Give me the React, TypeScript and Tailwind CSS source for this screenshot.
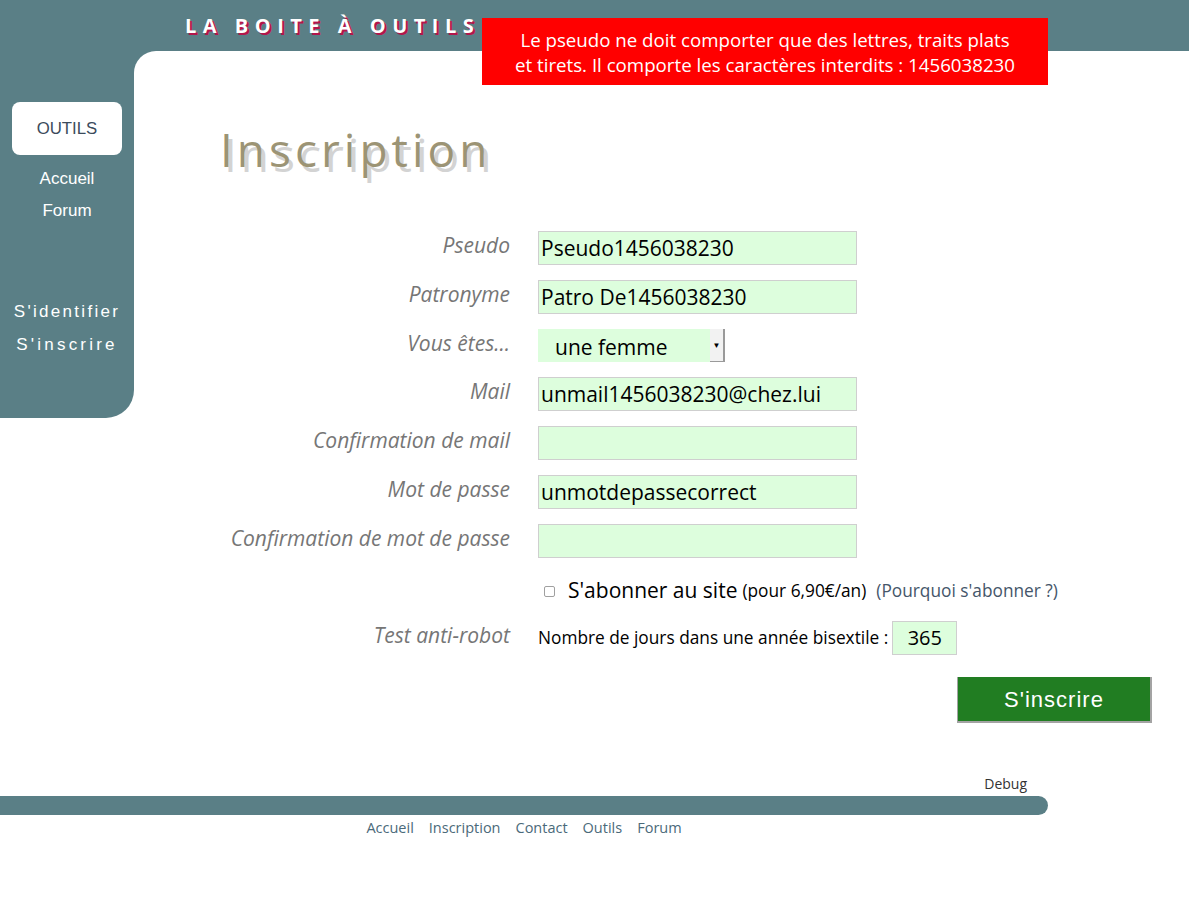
import type { ReactNode } from "react";

const TEAL = "bg-[#5a7f86]";

const fields: { label: string; value: string }[] = [
  { label: "Pseudo", value: "Pseudo1456038230" },
  { label: "Patronyme", value: "Patro De1456038230" },
  { label: "Vous êtes...", value: "__select__" },
  { label: "Mail", value: "unmail1456038230@chez.lui" },
  { label: "Confirmation de mail", value: "" },
  { label: "Mot de passe", value: "unmotdepassecorrect" },
  { label: "Confirmation de mot de passe", value: "" },
];

function Row({ label, children }: { label?: string; children: ReactNode }) {
  return (
    <div className="flex items-center gap-[28px]">
      <span className="w-[376px] shrink-0 text-right text-[21px] italic text-[#767676] -mt-[4px]">{label}</span>
      {children}
    </div>
  );
}

function FakeSelect() {
  return (
    <div className="flex h-[33px] w-[187px] items-stretch bg-[#ddfedd]">
      <span className="flex-1 pl-[17px] text-[21px] leading-[36px] text-black">une femme</span>
      <span className="flex w-[15px] items-center justify-center border-r-2 border-b border-[#9a9a9a] bg-[#f2f2f2] text-[8px] text-black">
        ▼
      </span>
    </div>
  );
}

export default function App() {
  return (
    <div
      className="relative min-h-[922px] w-full bg-[linear-gradient(#5a7f86_0_90px,white_90px)] font-['Open_Sans',sans-serif]"
    >
      {/* top band */}
      <div className="h-[51px] pl-[185px] pt-[11px]">
        <span className="text-[20px] font-bold tracking-[6.5px] text-white [text-shadow:2px_2px_0_#b3164b]">
          LA BOITE À OUTILS
        </span>
      </div>

      {/* error flash */}
      <div className="absolute left-[482px] top-[18px] flex h-[67px] w-[566px] items-center justify-center bg-[#ff0000] text-center text-[18.7px] leading-[25px] text-white">
        <p>
          Le pseudo ne doit comporter que des lettres, traits plats
          <br />
          et tirets. Il comporte les caractères interdits : 1456038230
        </p>
      </div>

      <div className="flex">
        <nav
          className={`${TEAL} flex h-[367px] w-[134px] shrink-0 flex-col items-center rounded-br-[28px] font-['Liberation_Sans',Arial,sans-serif] text-white`}
        >
          <div className="mt-[51px] flex h-[53px] w-[110px] items-center justify-center rounded-[8px] bg-white text-[16.8px] text-[#3b4b5c]">
            OUTILS
          </div>
          <a className="mt-[14px] text-[17px] leading-[20px]">Accueil</a>
          <a className="mt-[12px] text-[17px] leading-[20px]">Forum</a>
          <a className="mt-[81px] text-[17px] leading-[20px] tracking-[2.3px]">S'identifier</a>
          <a className="mt-[13px] text-[17px] leading-[20px] tracking-[3.2px]">S'inscrire</a>
        </nav>

        <main className="flex-1 rounded-tl-[22px] bg-white pb-[51px]">
          <h1 className="ml-[86px] mt-[72px] text-[46px] leading-[52px] tracking-[4px] text-[#9c9475] [text-shadow:4px_5px_0_#d3d3d3]">
            Inscription
          </h1>

          <div className="mt-[56px] flex flex-col gap-[15px]">
            {fields.map((f) => (
              <Row key={f.label} label={f.label}>
                {f.value === "__select__" ? (
                  <FakeSelect />
                ) : (
                  <div className="h-[34px] w-[319px] border border-[#cfcfcf] bg-[#ddfedd] pl-[2px] text-[21px] leading-[32px] text-black">
                    {f.value}
                  </div>
                )}
              </Row>
            ))}
          </div>

          <div className="mt-[16px] flex h-[34px] items-center pl-[404px]">
            <span className="ml-[6px] h-[11px] w-[11px] rounded-[2px] border border-[#a0a0a0] bg-white" />
            <span className="ml-[13px] text-[21px] text-black">S'abonner au site</span>
            <span className="ml-[5px] text-[17.3px] text-black">(pour 6,90€/an)</span>
            <span className="ml-[10px] text-[17.3px] text-[#45566a]">(Pourquoi s'abonner ?)</span>
          </div>

          <div className="mt-[13px]">
            <Row label="Test anti-robot">
              <div className="flex items-center">
                <span className="text-[17.3px] text-black">Nombre de jours dans une année bisextile :</span>
                <span className="ml-[4px] h-[34px] w-[65px] border border-[#cfcfcf] bg-[#ddfedd] text-center text-[20px] leading-[32px] text-black">
                  365
                </span>
              </div>
            </Row>
          </div>

          <div className="mt-[22px] flex justify-end pr-[37px]">
            <button
              type="button"
              className="h-[46px] w-[195px] border-b-2 border-l border-r-2 border-[#a3a3a3] bg-[#217d22] font-['Liberation_Sans',Arial,sans-serif] text-[22px] tracking-[1px] text-white"
            >
              S'inscrire
            </button>
          </div>
        </main>
      </div>

      <div className="w-[1048px] pr-[21px] text-right text-[14px] leading-[20px] text-[#333]">Debug</div>
      <div className={`${TEAL} mt-[2px] h-[19px] w-[1048px] rounded-r-full`} />
      <div className="flex w-[1048px] justify-center gap-[15px] pt-[3px] text-[14.5px] leading-[20px] text-[#4b6a7a]">
        <a>Accueil</a>
        <a>Inscription</a>
        <a>Contact</a>
        <a>Outils</a>
        <a>Forum</a>
      </div>
    </div>
  );
}
